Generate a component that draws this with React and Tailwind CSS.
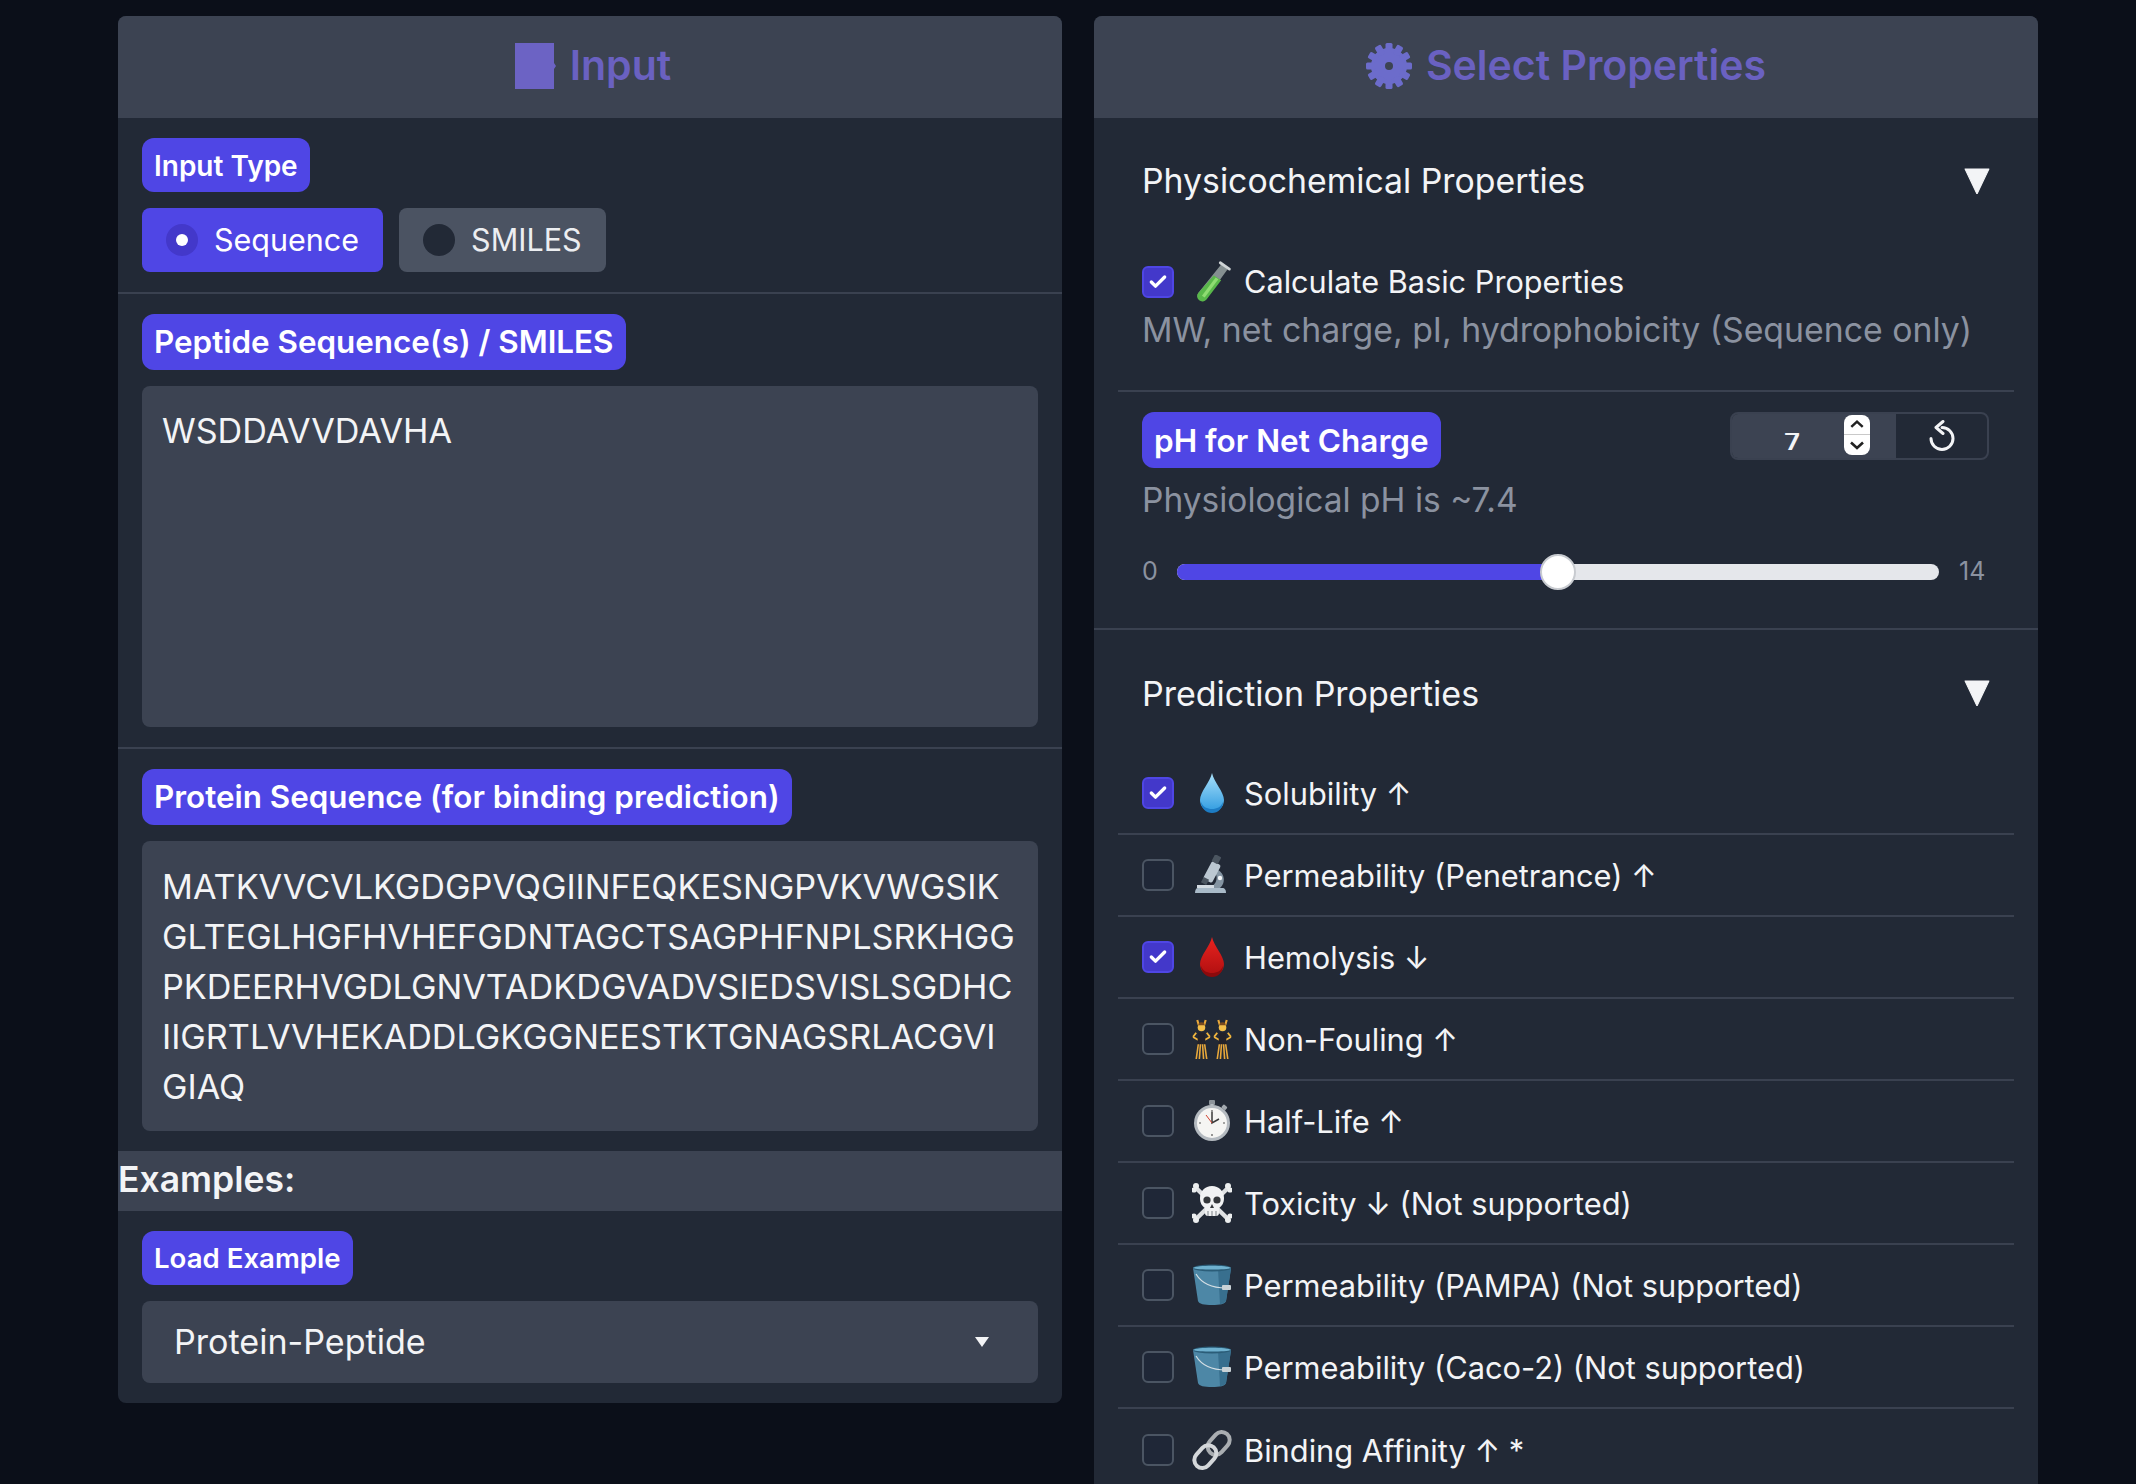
import { Check } from "lucide-react";

const PROTEIN = `MATKVVCVLKGDGPVQGIINFEQKESNGPVKVWGSIK
GLTEGLHGFHVHEFGDNTAGCTSAGPHFNPLSRKHGG
PKDEERHVGDLGNVTADKDGVADVSIEDSVISLSGDHC
IIGRTLVVHEKADDLGKGGNEESTKTGNAGSRLACGVI
GIAQ`;

function Drop({ from, to, dark }) {
  const id = `drop-${from.slice(1)}`;
  return (
    <svg viewBox="0 0 40 40" className="h-10 w-10">
      <defs>
        <linearGradient id={id} x1="0" y1="0" x2="0" y2="1">
          <stop offset="0" stopColor={from} />
          <stop offset="1" stopColor={to} />
        </linearGradient>
      </defs>
      <path d="M20 0C18 9 8 19 8 27a12 12 0 0 0 24 0C32 19 22 9 20 0Z" fill={`url(#${id})`} />
      <path d="M9 29a11 11 0 0 0 22 0c-2 5-6 7-11 7s-9-2-11-7Z" fill={dark} />
    </svg>
  );
}

function TestTube() {
  return (
    <svg viewBox="0 0 42 48" className="h-[44px] w-[40px]">
      <path d="M31 5 38 10 15 42a5 5 0 0 1-9-6Z" fill="#d7e3dc" opacity=".55" />
      <path d="M23 17 31 22 15 43a5 5 0 0 1-9-7Z" fill="#59b84a" />
      <path d="M25 19 28 21 13 41 10 39Z" fill="#8fdc72" />
      <path d="M30 3 40 10" stroke="#cfd4d6" strokeWidth="3" strokeLinecap="round" />
    </svg>
  );
}

function Microscope() {
  return (
    <svg viewBox="0 0 40 40" className="h-10 w-10">
      <path d="M6 33h24c3 0 4 2 4 5H3c0-3 1-5 3-5Z" fill="#a9bac8" />
      <path d="M26 15a11 11 0 0 1 2 18H17c6-2 10-9 6-16Z" fill="#8494a2" />
      <rect x="15" y="7" width="10" height="20" rx="2" transform="rotate(28 20 17)" fill="#bcc8d2" />
      <rect x="21" y="0" width="7" height="8" rx="1" transform="rotate(28 24 4)" fill="#4b5560" />
      <rect x="10" y="23" width="6" height="6" transform="rotate(28 13 26)" fill="#4b5560" />
      <rect x="5" y="30" width="17" height="3" fill="#d3dbe2" />
      <circle cx="28" cy="23" r="2.2" fill="#f2f5f7" />
    </svg>
  );
}

function Dancer({ x }) {
  return (
    <g transform={`translate(${x} 0)`}>
      <path d="M5 1 6.5 6M13 1l-1.5 5" stroke="#e9a83a" strokeWidth="2" />
      <circle cx="9" cy="8" r="3.6" fill="#f5c04a" />
      <path d="M6 6a3 3 0 0 1 6 0Z" fill="#7a4a1e" />
      <path d="M1 17 4 13M17 17l-3-4M1 17l5 3M17 17l-5 3" stroke="#f0b53e" strokeWidth="1.7" fill="none" />
      <path d="M6 13h6l1 11H5Z" fill="#23222a" />
      <path d="M6 24 4 38M8 24 7 38M12 24l2 14M10 24l1 14" stroke="#e9a83a" strokeWidth="1.5" />
    </g>
  );
}

function Dancers() {
  return (
    <svg viewBox="0 0 38 38" className="h-10 w-10">
      <Dancer x={0} />
      <Dancer x={20} />
    </svg>
  );
}

function Stopwatch() {
  return (
    <svg viewBox="0 0 40 42" className="h-[42px] w-10">
      <rect x="17" y="0" width="6" height="5" rx="1" fill="#8d949b" />
      <rect x="18.5" y="4" width="3" height="4" fill="#b6bcc2" />
      <rect x="30" y="5" width="5" height="4" rx="1" transform="rotate(40 32 7)" fill="#a2a8ae" />
      <circle cx="20" cy="23" r="18" fill="#b4bac0" />
      <circle cx="20" cy="23" r="15" fill="#f5f5f3" />
      <path d="M20 12v11l7-4" stroke="#3a3a3a" strokeWidth="1.5" fill="none" />
      <path d="M20 23 14 15" stroke="#d2402e" strokeWidth="1" />
      <path d="M20 10v2M20 34v2M7 23h2M31 23h2" stroke="#555" strokeWidth="1.2" />
    </svg>
  );
}

function Skull() {
  return (
    <svg viewBox="0 0 40 40" className="h-10 w-10">
      <path d="M4 5 36 36M36 5 4 36" stroke="#dfe1e3" strokeWidth="4.5" />
      <g fill="#eceeef">
        <circle cx="4" cy="3" r="3" /><circle cx="2" cy="7" r="2.6" />
        <circle cx="36" cy="3" r="3" /><circle cx="38" cy="7" r="2.6" />
        <circle cx="4" cy="37" r="3" /><circle cx="2" cy="33" r="2.6" />
        <circle cx="36" cy="37" r="3" /><circle cx="38" cy="33" r="2.6" />
      </g>
      <path d="M20 3c7 0 12 5 12 12 0 5-2 8-5 10v5a3 3 0 0 1-3 3h-8a3 3 0 0 1-3-3v-5c-3-2-5-5-5-10C8 8 13 3 20 3Z" fill="#f1f2f3" />
      <circle cx="15" cy="17" r="3.6" fill="#34373b" />
      <circle cx="25" cy="17" r="3.6" fill="#34373b" />
      <path d="M20 21l-2 4h4Z" fill="#34373b" />
      <path d="M16 28v5M20 28v5M24 28v5" stroke="#8f9499" strokeWidth="1.2" />
    </svg>
  );
}

function Bucket() {
  return (
    <svg viewBox="0 0 40 42" className="h-[42px] w-10">
      <path d="M1 4h38l-5 33c-1 3-6 4-14 4S7 40 6 37Z" fill="#4d87a6" />
      <path d="M26 5h13l-5 32c-1 2-3 3-6 3Z" fill="#386f8e" />
      <ellipse cx="20" cy="4" rx="19" ry="3.6" fill="#2b5d78" />
      <path d="M1 4c3-3 35-3 38 0-4 2-34 2-38 0Z" fill="#6fb1cf" />
      <path d="M4 10c6 10 18 14 30 14" stroke="#d5dfe4" strokeWidth="1.2" fill="none" />
      <rect x="30" y="21" width="9" height="5" rx="1" fill="#c9d2d6" />
    </svg>
  );
}

function Chain() {
  return (
    <svg viewBox="0 0 40 40" className="h-10 w-10" fill="none">
      <rect x="19" y="1" width="16" height="25" rx="8" transform="rotate(42 27 13)" stroke="#a9adb1" strokeWidth="4" />
      <rect x="5" y="14" width="16" height="25" rx="8" transform="rotate(42 13 27)" stroke="#d4d7da" strokeWidth="4" />
    </svg>
  );
}

function Badge({ size = "text-[28px]", className, children }) {
  return (
    <span className={`inline-flex items-center self-start rounded-xl bg-[#4f46e5] px-3 pt-[1px] font-semibold text-white ${size} ${className}`}>
      {children}
    </span>
  );
}

function Header({ icon, title, className = "" }) {
  return (
    <div className={`flex h-[102px] items-center justify-center gap-[14px] bg-[#3c4352] pb-[3px] ${className}`}>
      {icon}
      <span className="text-[41px] font-semibold text-[#6a61c1]">{title}</span>
    </div>
  );
}

function Triangle() {
  return (
    <svg viewBox="0 0 24 24" className="h-[26px] w-[26px]">
      <path d="M1 1h22L12 24Z" fill="#f3f4f6" stroke="#f3f4f6" strokeWidth="1" strokeLinejoin="round" />
    </svg>
  );
}

function Checkbox({ checked }) {
  return (
    <span className={`flex h-8 w-8 shrink-0 items-center justify-center rounded-md border-2 ${checked ? "border-[#4f46e5] bg-[#4338ca]" : "border-[#4b5563] bg-[#1f2737]"}`}>
      {checked && <Check className="h-5 w-5 text-white" strokeWidth={4} />}
    </span>
  );
}

function Radio({ label, selected }) {
  return (
    <div className={`flex h-16 items-center gap-4 rounded-lg px-6 text-[30.5px] ${selected ? "bg-[#4f46e5] text-white" : "bg-[#4b5362] text-[#eceef1]"}`}>
      <span className={`flex h-8 w-8 items-center justify-center rounded-full ${selected ? "bg-[#4338ca]" : "bg-[#222936]"}`}>
        {selected && <span className="h-3 w-3 rounded-full bg-white" />}
      </span>
      {label}
    </div>
  );
}

function PropertyRow({ checked, icon, label, last }) {
  return (
    <div className={`flex h-[82px] items-center border-[#3a4150] px-6 ${last ? "" : "border-b-2"}`}>
      <Checkbox checked={checked} />
      <span className="ml-[18px] flex w-10 shrink-0 items-center justify-center">{icon}</span>
      <span className="ml-3 pt-[2px] text-[30.8px] text-[#f3f4f6]">{label}</span>
    </div>
  );
}

const PROPERTIES = [
  { checked: true, icon: <Drop from="#a9e0fa" to="#2f9be0" dark="#1d7cc4" />, label: "Solubility ↑" },
  { checked: false, icon: <Microscope />, label: "Permeability (Penetrance) ↑" },
  { checked: true, icon: <Drop from="#e8231f" to="#b00f10" dark="#8c0a0c" />, label: "Hemolysis ↓" },
  { checked: false, icon: <Dancers />, label: "Non-Fouling ↑" },
  { checked: false, icon: <Stopwatch />, label: "Half-Life ↑" },
  { checked: false, icon: <Skull />, label: "Toxicity ↓ (Not supported)" },
  { checked: false, icon: <Bucket />, label: "Permeability (PAMPA) (Not supported)" },
  { checked: false, icon: <Bucket />, label: "Permeability (Caco-2) (Not supported)" },
  { checked: false, icon: <Chain />, label: "Binding Affinity ↑ *" },
];

export default function App() {
  return (
    <div className="flex h-[1484px] items-start gap-8 overflow-hidden bg-[#0b0f19] pt-4 pl-[118px] font-['Inter',sans-serif] text-[#f3f4f6]">
      {/* Input column */}
      <div className="w-[944px] shrink-0 overflow-hidden rounded-lg bg-[#222936]">
        <Header
          title="Input"
          className="pl-[6px]"
          icon={
            <svg viewBox="0 0 41 46" className="h-[46px] w-[41px]">
              <path d="M0 0h39v20l2 3-2 3v20H0Z" fill="#6c63c4" />
            </svg>
          }
        />

        <div className="flex flex-col gap-4 border-b-2 border-[#3a4150] p-6 py-5">
          <Badge className="h-[54px]">Input Type</Badge>
          <div className="flex gap-4">
            <Radio label="Sequence" selected />
            <Radio label="SMILES" />
          </div>
        </div>

        <div className="flex flex-col gap-4 border-b-2 border-[#3a4150] p-6 py-5">
          <Badge size="text-[31.4px]" className="h-[56px]">Peptide Sequence(s) / SMILES</Badge>
          <textarea
            readOnly
            value="WSDDAVVDAVHA"
            className="h-[341px] w-full resize-none rounded-lg bg-[#3c4352] px-5 py-[20px] text-[34.2px] leading-[50px] text-[#f3f4f6] outline-none"
          />
        </div>

        <div className="flex flex-col gap-4 px-6 pt-5 pb-5">
          <Badge size="text-[31.4px]" className="h-[56px]">Protein Sequence (for binding prediction)</Badge>
          <textarea
            readOnly
            value={PROTEIN}
            className="h-[290px] w-full resize-none overflow-hidden rounded-lg bg-[#3c4352] pt-[21px] pr-2 pb-5 pl-5 text-[34.2px] leading-[50px] whitespace-pre text-[#f3f4f6] outline-none"
          />
        </div>

        <div className="flex h-[60px] items-center bg-[#3c4352] pb-[2px] text-[35.5px] font-semibold text-[#f3f4f6]">Examples:</div>

        <div className="flex flex-col gap-4 px-6 py-5">
          <Badge size="text-[27.6px]" className="h-[54px]">Load Example</Badge>
          <div className="flex h-[82px] items-center justify-between rounded-lg bg-[#3c4352] pr-[49px] pl-8 text-[34.1px]">
            Protein-Peptide
            <svg viewBox="0 0 14 10" className="h-[10px] w-[14px]">
              <path d="M0 0h14L7 10Z" fill="#f3f4f6" />
            </svg>
          </div>
        </div>
      </div>

      {/* Properties column */}
      <div className="w-[944px] shrink-0 rounded-t-lg bg-[#222936]">
        <div className="overflow-hidden rounded-t-lg">
          <Header
            title="Select Properties"
            icon={
              <svg viewBox="0 0 46 46" className="h-[46px] w-[46px]">
                <g fill="#6c6ccb">
                  <circle cx="23" cy="23" r="18" />
                  {[0, 30, 60, 90, 120, 150, 180, 210, 240, 270, 300, 330].map((a) => (
                    <rect key={a} x="19.5" y="0" width="7" height="10" rx="1.5" transform={`rotate(${a} 23 23)`} />
                  ))}
                </g>
                <circle cx="23" cy="23" r="4" fill="#3c4352" />
              </svg>
            }
          />
        </div>

        <div className="border-b-2 border-[#3a4150]">
          <div className="flex h-[126px] items-center justify-between pr-[48px] pl-12 text-[33.8px]">
            Physicochemical Properties
            <Triangle />
          </div>
          <div className="mx-6 mt-[17px] border-b-2 border-[#3a4150] px-6 pb-[35px]">
            <div className="flex h-[42px] items-center">
              <Checkbox checked />
              <span className="ml-[18px] flex w-10 justify-center"><TestTube /></span>
              <span className="ml-3 text-[30.7px]">Calculate Basic Properties</span>
            </div>
            <div className="mt-[2px] text-[33.8px] leading-[50px] text-[#8b92a0]">MW, net charge, pI, hydrophobicity (Sequence only)</div>
          </div>
          <div className="px-12 pt-5 pb-[38px]">
            <div className="flex items-start justify-between pr-[1px]">
              <Badge size="text-[31.5px]" className="h-[56px]">pH for Net Charge</Badge>
              <div className="flex h-12 w-[259px] overflow-hidden rounded-lg border-2 border-[#3a4150]">
                <div className="relative flex w-[164px] justify-end bg-[#3c4352] pr-[26px]">
                  <span className="absolute top-[19px] left-[52px] h-[17px] overflow-hidden text-[28px] leading-[28px] font-semibold">
                    <span className="-mt-1 block">7</span>
                  </span>
                  <span className="mt-[1px] flex h-10 w-[26px] flex-col rounded-lg bg-white">
                    <svg viewBox="0 0 26 20" className="h-5 w-[26px] border-b border-[#c9c9c9]" fill="none" stroke="#222" strokeWidth="2.6">
                      <path d="M7 12.5 13 7l6 5.5" />
                    </svg>
                    <svg viewBox="0 0 26 20" className="h-5 w-[26px]" fill="none" stroke="#222" strokeWidth="2.6">
                      <path d="M7 7.5 13 13l6-5.5" />
                    </svg>
                  </span>
                </div>
                <div className="flex flex-1 items-center justify-center">
                  <svg viewBox="0 0 32 32" className="h-8 w-8" fill="none" stroke="#f3f4f6" strokeWidth="3" strokeLinecap="round" strokeLinejoin="round">
                    <path d="M16 7.5a11 11 0 1 1-11 11" />
                    <path d="M17 1.5 10 7.5l7 6" />
                  </svg>
                </div>
              </div>
            </div>
            <div className="mt-[7px] text-[33.5px] leading-[50px] text-[#8b92a0]">Physiological pH is ~7.4</div>
            <div className="mt-[29px] flex h-9 items-center text-[25px] text-[#8b92a0]">
              <span className="w-[35px]">0</span>
              <div className="relative h-4 w-[762px] rounded-full bg-[#e5e7eb]">
                <div className="h-full w-1/2 rounded-full bg-[#4f46e5]" />
                <span className="absolute top-1/2 left-1/2 h-9 w-9 -translate-x-1/2 -translate-y-1/2 rounded-full border-2 border-[#c8cbd0] bg-white" />
              </div>
              <span className="ml-5">14</span>
            </div>
          </div>
        </div>

        <div className="flex h-[126px] items-center justify-between pr-[48px] pl-12 text-[34px]">
          Prediction Properties
          <Triangle />
        </div>
        <div className="mx-6 -mt-[3px]">
          {PROPERTIES.map((p, i) => (
            <PropertyRow key={p.label} {...p} last={i === PROPERTIES.length - 1} />
          ))}
        </div>
      </div>
    </div>
  );
}
